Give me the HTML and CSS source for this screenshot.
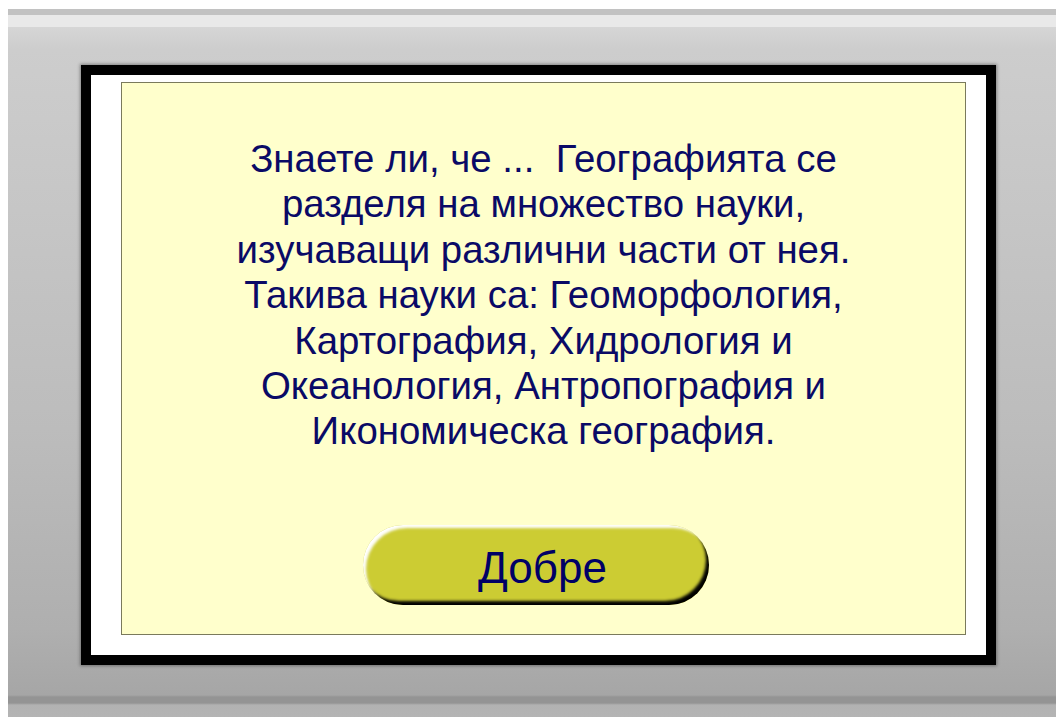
FILE: index.html
```html
<!DOCTYPE html>
<html lang="bg">
<head>
<meta charset="utf-8">
<title>Знаете ли, че ...</title>
<link rel="stylesheet" href="styles.css">
</head>
<body>
<div class="desk">
  <div class="frame">
    <div class="panel">
      <p class="fact">Знаете ли, че ...&nbsp; Географията се<br>разделя на множество науки,<br>изучаващи различни части от нея.<br>Такива науки са: Геоморфология,<br>Картография, Хидрология и<br>Океанология, Антропография и<br>Икономическа география.</p>
      <button class="ok" type="button">Добре</button>
    </div>
  </div>
</div>
</body>
</html>
```

FILE: styles.css
```css
html, body {
  margin: 0;
  height: 100%;
  background: #ffffff;
  overflow: hidden;
}

.desk {
  margin: 9px 0 0 8px;
  height: 708px;
  box-sizing: border-box;
  padding: 56px 0 0 73px;
  background:
    linear-gradient(to bottom,
      #c2c2c2 0px, #c2c2c2 6px,
      #e9e9e9 6px, #e9e9e9 18px,
      #d6d6d6 18px, #cdcdcd 40px,
      #c6c6c6 200px, #bcbcbc 420px,
      #afafaf 620px, #a6a6a6 686px,
      #949494 688px, #949494 694px,
      #b2b2b2 696px, #b4b4b4 708px);
}

.frame {
  border: 10px solid #000000;
  background: #ffffff;
  padding: 7px 20px 20px 30px;
  box-sizing: content-box;
  display: flex;
  box-shadow: 0 0 3px 1px rgba(40, 40, 40, 0.45);
  width: 845px;
  height: 553px;
}

.panel {
  flex: 1;
  border: 1px solid #7a7a5c;
  background: #ffffcc;
  display: flex;
  flex-direction: column;
  align-items: center;
}

.fact {
  margin: 53px 0 0 0;
  font-family: "Liberation Sans", Arial, sans-serif;
  font-size: 38.4px;
  line-height: 45.4px;
  color: #0a0a66;
  text-align: center;
}

.ok {
  margin-top: 71px;
  margin-right: 16px;
  width: 346px;
  height: 80px;
  border: none;
  border-radius: 40px;
  background: #cccc33;
  box-shadow:
    inset 4px 4px 3px -1px #ffffff,
    inset -4px -5px 3px -1px #000000;
  font-family: "Liberation Sans", Arial, sans-serif;
  font-size: 44px;
  color: #000066;
  padding: 6px 0 0 14px;
  cursor: pointer;
}
```
